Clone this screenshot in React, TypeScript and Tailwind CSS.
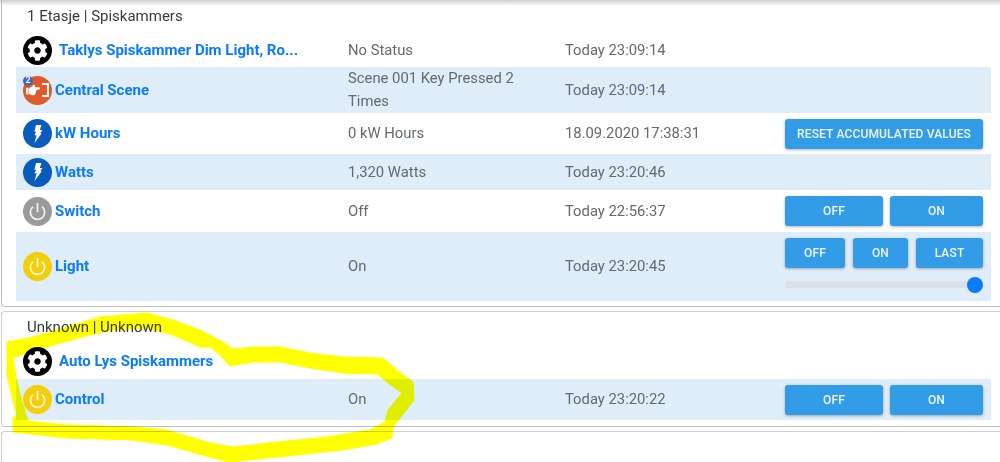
import { FaCog, FaHandPointRight } from "react-icons/fa";
import { Power } from "lucide-react";
import type { ReactNode } from "react";

function GearIcon() {
  return (
    <span className="flex h-[29px] w-[29px] shrink-0 items-center justify-center rounded-full bg-black">
      <FaCog className="h-[21px] w-[21px] text-white" />
    </span>
  );
}

function BoltIcon() {
  return (
    <span className="flex h-[29px] w-[29px] shrink-0 items-center justify-center rounded-full bg-[#0a5cbc]">
      <svg width="10" height="18" viewBox="0 0 10 18" fill="white">
        <path d="M3 0H8.5L6.8 5H9.5L7.3 8.2H8.8L1.5 18L3.6 10.2H1.4L3.2 6.8H1.4Z" />
      </svg>
    </span>
  );
}

function PowerIcon({ color }: { color: string }) {
  return (
    <span className={`flex h-[29px] w-[29px] shrink-0 items-center justify-center rounded-full ${color}`}>
      <Power className="h-[19px] w-[19px] text-white/85" strokeWidth={2.2} />
    </span>
  );
}

function SceneIcon() {
  return (
    <span className="relative flex h-[29px] w-[29px] shrink-0 items-center justify-center gap-[1px] rounded-full bg-[#e0592a]">
      <FaHandPointRight className="h-[14px] w-[14px] text-white" />
      <svg width="8" height="14" viewBox="0 0 8 14" fill="none" stroke="white" strokeWidth="2">
        <path d="M1 1h6v12H1" />
      </svg>
      <span className="absolute left-0 top-0 flex h-[10px] w-[10px] items-center justify-center rounded-full bg-[#3f62c4] text-[9px] font-bold leading-none text-white">
        2
      </span>
    </span>
  );
}

function Btn({ children, className }: { children: ReactNode; className: string }) {
  return (
    <button className={`h-[30px] rounded-[3px] bg-[#339ce6] text-[12px] font-medium tracking-[0.15px] text-[#eef7fd] shadow-[0_1px_3px_rgba(0,0,0,0.3)] ${className}`}>
      {children}
    </button>
  );
}

function Row({
  icon,
  name,
  status,
  time,
  height,
  shaded,
  gear,
  children,
}: {
  icon: ReactNode;
  name: string;
  status?: ReactNode;
  time?: string;
  height: string;
  shaded?: boolean;
  gear?: boolean;
  children?: ReactNode;
}) {
  return (
    <div className={`flex items-center ${height} ${shaded ? "bg-[#dfedf9]" : "bg-white"}`}>
      <div className="flex w-[332px] shrink-0 items-center pl-[7px]">
        {icon}
        <span className={`text-[15px] font-bold text-[#0a7bfb] ${gear ? "ml-[7px]" : "ml-[3px]"}`}>{name}</span>
      </div>
      <div className="w-[217px] shrink-0 text-[14.8px] leading-[23px] text-[#63696f]">{status}</div>
      <div className="w-[220px] shrink-0 text-[14.8px] text-[#63696f]">{time}</div>
      <div className="w-[198px] shrink-0">{children}</div>
    </div>
  );
}

function OffOn() {
  return (
    <div className="flex gap-[7px]">
      <Btn className="w-[98px]">OFF</Btn>
      <Btn className="w-[93px]">ON</Btn>
    </div>
  );
}

const HIGHLIGHT =
  "M7 342L33 337L67 327L100 317L147 313L173 320L200 330L223 342L233 349L253 347L280 347L310 353L343 357L383 358L397 370L413 382L414 400L393 427L392 438L377 444L343 450L277 457L230 462L220 460L167 445L133 440L67 438L13 432L13 417L17 417L7 375Z" +
  "M13 358L17 382L22 402L28 421L67 425L133 427L167 430L210 443L233 447L277 442L327 437L370 430L385 422L388 410L402 393L387 382L377 374L343 373L310 368L280 362L253 362L230 366L220 355L210 347L200 347L173 335L147 328L113 330L90 335L47 347Z";

export default function App() {
  return (
    <div className="relative h-[462px] w-[1000px] overflow-hidden bg-white font-['Roboto',sans-serif]">
      <div className="h-[6px] bg-gradient-to-b from-[#cfcfcf] to-white" />

      <section className="-mt-[6px] ml-[1px] h-[307px] w-[1010px] rounded-b-[4px] border border-t-0 border-[#bdbdbd] pl-[14px]">
        <h2 className="h-[34px] pl-[11px] pt-[7px] text-[15px] leading-[18px] text-[#3a3a3a]">1 Etasje | Spiskammers</h2>
        <div className="w-[975px]">
          <Row icon={<GearIcon />} gear name="Taklys Spiskammer Dim Light, Ro..." status="No Status" time="Today 23:09:14" height="h-[33px]" />
          <Row
            icon={<SceneIcon />}
            name="Central Scene"
            status={<>Scene 001 Key Pressed 2<br />Times</>}
            time="Today 23:09:14"
            height="h-[46px]"
            shaded
          />
          <Row icon={<BoltIcon />} name="kW Hours" status="0 kW Hours" time="18.09.2020 17:38:31" height="h-[41px]">
            <Btn className="w-[198px]">RESET ACCUMULATED VALUES</Btn>
          </Row>
          <Row icon={<BoltIcon />} name="Watts" status="1,320 Watts" time="Today 23:20:46" height="h-[36px]" shaded />
          <Row icon={<PowerIcon color="bg-[#9a9a9a]" />} name="Switch" status="Off" time="Today 22:56:37" height="h-[42px]">
            <OffOn />
          </Row>
          <Row icon={<PowerIcon color="bg-[#f2cf0a]" />} name="Light" status="On" time="Today 23:20:45" height="h-[69px]" shaded>
            <div className="pb-[7px]">
              <div className="flex gap-[8px]">
                <Btn className="w-[60px]">OFF</Btn>
                <Btn className="w-[55px]">ON</Btn>
                <Btn className="w-[67px]">LAST</Btn>
              </div>
              <div className="relative mt-[13px] h-[7px] rounded-full bg-[#dde1e6]">
                <span className="absolute right-0 top-[-4.5px] h-[16px] w-[16px] rounded-full bg-[#0a7bfb]" />
              </div>
            </div>
          </Row>
        </div>
      </section>

      <section className="ml-[1px] mt-[4px] h-[116px] w-[1010px] rounded-[4px] border border-[#cfcfcf] border-b-[#bdbdbd] pl-[14px]">
        <h2 className="h-[32px] pl-[11px] pt-[6px] text-[15px] leading-[18px] text-[#3a3a3a]">Unknown | Unknown</h2>
        <div className="w-[975px]">
          <Row icon={<GearIcon />} gear name="Auto Lys Spiskammers" height="h-[35px]" />
          <Row icon={<PowerIcon color="bg-[#f2cf0a]" />} name="Control" status="On" time="Today 23:20:22" height="h-[41px]" shaded>
            <OffOn />
          </Row>
        </div>
      </section>

      <section className="ml-[1px] mt-[4px] h-[40px] w-[1010px] rounded-t-[4px] border border-b-0 border-[#cfcfcf]" />

      <svg className="pointer-events-none absolute left-0 top-0 mix-blend-multiply" width="1000" height="462" viewBox="0 0 1000 462">
        <path d={HIGHLIGHT} fill="#ffff00" fillRule="evenodd" stroke="#ffff00" strokeWidth="1" strokeLinejoin="round" />
      </svg>
    </div>
  );
}
